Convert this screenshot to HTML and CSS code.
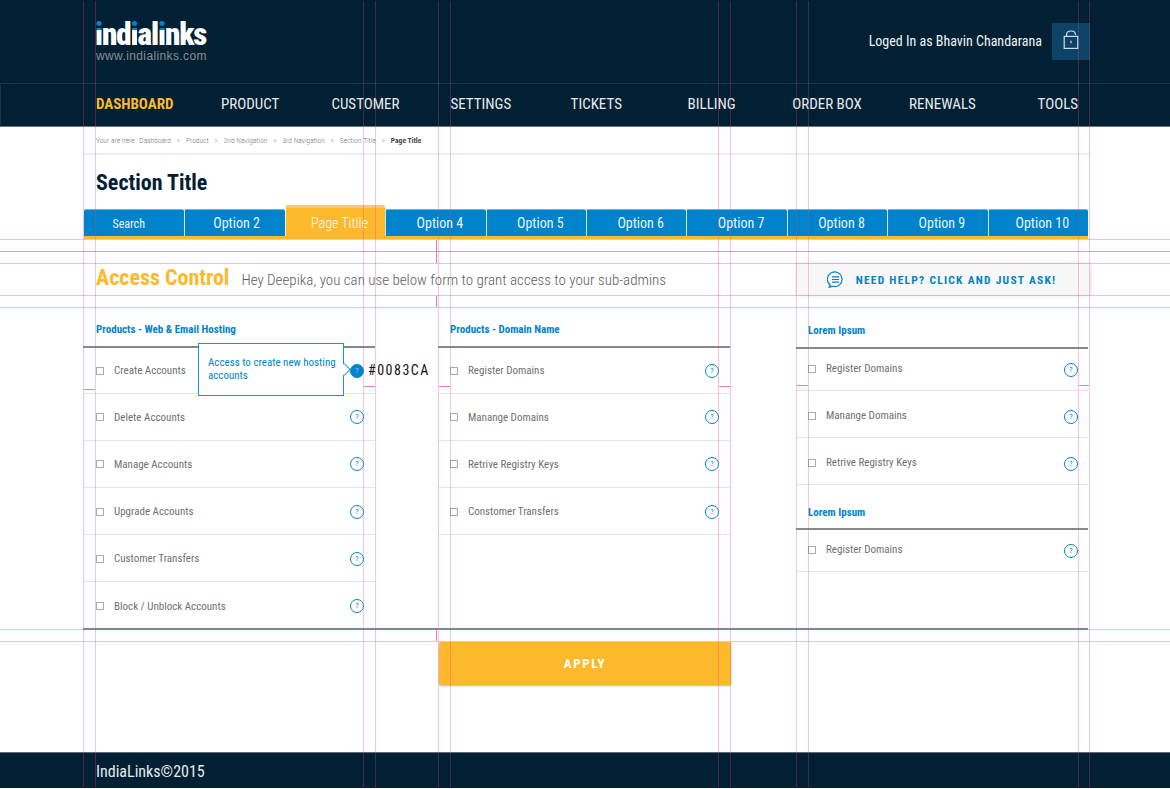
FILE: index.html
```html
<!DOCTYPE html>
<html lang="en">
  <head>
    <meta charset="UTF-8" />
    <title>IndiaLinks - Access Control</title>
    <link rel="stylesheet" href="styles.css">
  </head>
  <body>
    <header class="top">
      <div class="top-inner">
        <div class="logo">
          <div class="logo-name"><span class="dot-i">i</span>nd<span class="dot-i">i</span>al<span class="dot-i">i</span>nks</div>
          <div class="logo-url">www.indialinks.com</div>
        </div>
        <div class="user">
          <span class="user-name">Loged In as Bhavin Chandarana</span>
          <a class="lock" href="#">
            <svg width="16" height="20" viewBox="0 0 16 20" fill="none" stroke="#d5dde2" stroke-width="1.2">
              <rect x="1.2" y="6.4" width="13.6" height="12" />
              <path d="M3.6 6.4V4.2C3.6 2.2 5.6 1 8 1S12.4 2.2 12.4 4.2V5" />
              <path d="M8 10.8v2.4" />
            </svg>
          </a>
        </div>
      </div>
    </header>

    <nav class="mainnav">
      <a class="active" href="#">DASHBOARD</a>
      <a href="#">PRODUCT</a>
      <a href="#">CUSTOMER</a>
      <a href="#">SETTINGS</a>
      <a href="#">TICKETS</a>
      <a href="#">BILLING</a>
      <a href="#">ORDER BOX</a>
      <a href="#">RENEWALS</a>
      <a href="#">TOOLS</a>
    </nav>

    <main class="wrap">
      <div class="crumbs">
        <span>Your are here : Dashboard</span><i>&gt;</i>
        <span>Product</span><i>&gt;</i>
        <span>2nd Navigation</span><i>&gt;</i>
        <span>3rd Navigation</span><i>&gt;</i>
        <span>Section Title</span><i>&gt;</i>
        <b>Page Title</b>
      </div>

      <h1 class="section-title">Section Title</h1>

      <div class="tabs">
        <a class="search" href="#">Search</a>
        <a class="second-tab" href="#">Option 2</a>
        <a class="current" href="#">Page Titlle</a>
        <a href="#">Option 4</a>
        <a href="#">Option 5</a>
        <a href="#">Option 6</a>
        <a href="#">Option 7</a>
        <a href="#">Option 8</a>
        <a href="#">Option 9</a>
        <a href="#">Option 10</a>
      </div>

      <div class="heading">
        <h2>Access Control</h2>
        <p>Hey Deepika, you can use below form to grant access to your sub-admins</p>
        <a class="help" href="#">
          <svg width="17" height="17" viewBox="0 0 17 17" fill="none" stroke="#0083ca" stroke-width="1.2">
            <path d="M3.4 14.2A7.3 7.3 0 1 1 5.6 15.3L2.2 16Z" />
            <path d="M5 5.8h7M5 8.5h7M5 11.2h7" />
          </svg>
          NEED HELP? CLICK AND JUST ASK!
        </a>
      </div>

      <div class="columns">
        <section class="col">
          <h3>Products - Web &amp; Email Hosting</h3>
          <ul>
            <li class="has-tip">
              <span class="box"></span>Create Accounts<span class="q on">?</span>
              <div class="tip">Access to create new hosting accounts</div>
              <span class="hex">#0083CA</span>
            </li>
            <li><span class="box"></span>Delete Accounts<span class="q">?</span></li>
            <li><span class="box"></span>Manage Accounts<span class="q">?</span></li>
            <li><span class="box"></span>Upgrade Accounts<span class="q">?</span></li>
            <li><span class="box"></span>Customer Transfers<span class="q">?</span></li>
            <li><span class="box"></span>Block / Unblock Accounts<span class="q">?</span></li>
          </ul>
        </section>

        <section class="col middle">
          <h3>Products - Domain Name</h3>
          <ul>
            <li class="has-tip"><span class="box"></span>Register Domains<span class="q">?</span></li>
            <li><span class="box"></span>Manange Domains<span class="q">?</span></li>
            <li><span class="box"></span>Retrive Registry Keys<span class="q">?</span></li>
            <li><span class="box"></span>Constomer Transfers<span class="q">?</span></li>
          </ul>
        </section>

        <section class="col side">
          <h3>Lorem Ipsum</h3>
          <ul>
            <li><span class="box"></span>Register Domains<span class="q">?</span></li>
            <li><span class="box"></span>Manange Domains<span class="q">?</span></li>
            <li><span class="box"></span>Retrive Registry Keys<span class="q">?</span></li>
          </ul>
          <h3 class="second">Lorem Ipsum</h3>
          <ul>
            <li><span class="box"></span>Register Domains<span class="q">?</span></li>
          </ul>
        </section>
      </div>

      <div class="actions">
        <button class="apply">APPLY</button>
      </div>
    </main>

    <footer class="foot">IndiaLinks©2015</footer>

    <!-- design guides left on top of the comp -->
    <svg class="guides" width="1170" height="789" viewBox="0 0 1170 789">
      <g stroke="#f0408a" stroke-width="1" fill="none">
        <path stroke-opacity="0.3" d="M83.5 1V789M95.5 1V789M363.5 1V789M375.5 1V789M438.5 1V789M450.5 1V789M718.5 1V789M730.5 1V789M796.5 1V789M808.5 1V789M1078.5 1V789M1089.5 1V789" />
        <path stroke-opacity="0.35" d="M0 239.5H1170M0 263.5H1170M0 295.5H1170M0 307.5H1170M0 641.5H1170" />
        <path stroke-opacity="0.6" d="M0 251.5H1170" />
        <path stroke-opacity="0.35" d="M0 629.5H1170" />
        <path stroke-opacity="0.7" d="M436.5 240V251M436.5 252V263M436.5 296V307M436.5 630V641" />
        <path stroke-opacity="0.7" d="M84 389.5H95M364 386.5H375M439 386.5H450M719 386.5H730M797 385.5H808M1079 385.5H1089" />
      </g>
    </svg>
  </body>
</html>
```

FILE: styles.css
```css
* {
  box-sizing: border-box;
}
html,
body {
  margin: 0;
  height: 789px;
  overflow: hidden;
}
body {
  position: relative;
  font-family: Roboto, sans-serif;
  font-stretch: condensed;
  background: #fff;
  color: #666;
}
a {
  color: inherit;
  text-decoration: none;
}

/* header */
.top {
  height: 83px;
  background: #012033;
}
.top-inner {
  margin-left: 83px;
  width: 1007px;
  padding: 23px 0 0 13px;
  display: flex;
  justify-content: space-between;
}
.logo-name {
  margin-left: -1px;
  font-size: 31px;
  line-height: 24px;
  height: 26px;
  font-weight: 900;
  letter-spacing: -1.1px;
  color: #fff;
}
.dot-i {
  background: linear-gradient(#0083ca 0 14px, #fff 14px);
  -webkit-background-clip: text;
  background-clip: text;
  color: transparent;
}
.logo-url {
  font-family: "Liberation Sans", sans-serif;
  font-stretch: normal;
  font-size: 12px;
  line-height: 15px;
  letter-spacing: 0.38px;
  color: #8a8f93;
}
.user {
  display: flex;
  align-items: center;
  gap: 10px;
  height: 37px;
  font-size: 14px;
  color: #f1f3f4;
}
.user-name {
  padding-bottom: 2px;
}
.lock {
  width: 38px;
  height: 37px;
  background: #0b4468;
  display: flex;
  align-items: center;
  justify-content: center;
}
.lock svg {
  margin-bottom: 3px;
}

/* main navigation */
.mainnav {
  height: 44px;
  padding: 0 0 2px 76px;
  display: grid;
  grid-template-columns: repeat(9, 115.4px);
  align-items: center;
  background: #012033;
  border-top: 1px solid #1d3442;
  border-bottom: 1px solid #6b7780;
  border-left: 1px solid #1d3442;
  font-size: 15px;
  color: #e8ebed;
}
.mainnav a {
  text-align: center;
}
.mainnav .active {
  color: #fdb92c;
  font-weight: 700;
}

/* page */
.wrap {
  margin-left: 83px;
  width: 1007px;
}
.crumbs {
  height: 28px;
  padding: 1px 0 0 13px;
  display: flex;
  align-items: center;
  gap: 5.7px;
  border-bottom: 2px solid #eee;
  font-size: 7.5px;
  font-weight: 300;
  color: #777;
}
.crumbs i {
  font-style: normal;
  font-size: 8px;
  color: #888;
}
.crumbs b {
  color: #444;
  font-weight: 700;
}
.section-title {
  margin: 0;
  padding: 15px 0 0 13px;
  height: 50px;
  font-size: 22px;
  line-height: 26px;
  color: #012033;
}

/* tabs */
.tabs {
  margin: 4px 0 0 1px;
  width: 1004px;
  height: 30px;
  display: grid;
  grid-template-columns: repeat(10, 1fr);
  align-items: end;
  border-bottom: 3px solid #fdb92c;
}
.tabs a {
  height: 27px;
  padding-left: 8px;
  background: #0083ca;
  border-top: 1px solid #6bb6e0;
  border-left: 1px solid #cfe7f5;
  border-radius: 2px 2px 0 0;
  text-align: center;
  font-size: 14px;
  line-height: 26px;
  color: #eaf5fb;
}
.tabs a:first-child {
  border-left: 0;
}
.tabs .search {
  padding: 0 11px 0 0;
  font-size: 12px;
  line-height: 28px;
}
.tabs .second-tab {
  padding-left: 3px;
}
.tabs .current {
  height: 31px;
  margin-top: -4px;
  background: #fdb92c;
  border-top: 3px solid #fecb5f;
  border-left-color: #fff;
  line-height: 30px;
  font-weight: 300;
  color: #fff;
}

/* heading row */
.heading {
  margin-top: 25px;
  height: 31px;
  padding-left: 13px;
  display: flex;
  align-items: center;
  font-weight: 300;
}
.heading h2 {
  margin: 0 0 4px;
  font-size: 22px;
  font-weight: 700;
  color: #fdb92c;
}
.heading p {
  margin: 0 0 0 12px;
  font-size: 15px;
  color: #5d5d5d;
}
.help {
  margin-left: auto;
  width: 293px;
  height: 31px;
  padding-right: 4px;
  display: flex;
  align-items: center;
  justify-content: center;
  gap: 12px;
  background: #f7f7f7;
  box-shadow: 0 0 4px rgba(0, 0, 0, 0.2);
  font-size: 11.5px;
  font-weight: 700;
  letter-spacing: 1.25px;
  color: #0083ca;
}

/* permission columns */
.columns {
  display: grid;
  grid-template-columns: 292px 292px 292px;
  column-gap: 63px;
  height: 335px;
  border-bottom: 2px solid #888;
  width: 1005px;
}
.col h3 {
  margin: 0;
  height: 53px;
  padding: 28px 0 0 13px;
  border-bottom: 2px solid #888;
  font-size: 11px;
  line-height: 14px;
  font-weight: 700;
  color: #0083ca;
}
.col ul {
  margin: 0;
  padding: 0;
  list-style: none;
}
.col li {
  position: relative;
  height: 47px;
  padding: 0 11px 0 13px;
  display: flex;
  align-items: center;
  border-bottom: 1px solid #e4e4e4;
  font-size: 11px;
  color: #707070;
}
.col li:nth-child(n+4) {
  padding-top: 1px;
}
.col li.has-tip {
  height: 46px;
}
.col:first-child li:last-child {
  border-bottom: 0;
}
.middle h3 {
  padding-left: 12px;
}
.middle li {
  padding-left: 12px;
}
.box {
  width: 8px;
  height: 8px;
  margin-right: 10px;
  border: 1px solid #aaa;
}
.q {
  margin-left: auto;
  width: 14px;
  height: 14px;
  border: 1.3px solid #0083ca;
  border-radius: 50%;
  text-align: center;
  font-size: 8px;
  line-height: 11.5px;
  color: #0083ca;
}
.q.on {
  background: #0083ca;
  color: #9fd2ee;
}

/* right column rows sit a little higher */
.col.side {
  margin: 0 -3px 0 3px;
}
.side h3 {
  height: 54px;
  padding: 29px 0 0 12px;
}
.side h3.second {
  height: 45px;
  padding-top: 21px;
}
.side li {
  padding: 3px 10px 0 12px;
}
.side li:first-child {
  height: 42px;
  padding: 0 10px 2px 12px;
}
.side .q {
  margin-top: 2px;
}

/* tooltip sits over the first row */
.tip {
  position: absolute;
  left: 115px;
  top: -5px;
  width: 146px;
  height: 53px;
  padding: 12px 6px 0 9px;
  background: #fff;
  border: 1.5px solid #1c8fcf;
  font-size: 11px;
  line-height: 13px;
  color: #0083ca;
}
.tip::after {
  content: "";
  position: absolute;
  right: -5.5px;
  top: 21px;
  width: 8px;
  height: 8px;
  background: #fff;
  border-top: 1.5px solid #1c8fcf;
  border-right: 1.5px solid #1c8fcf;
  transform: rotate(45deg);
}
.hex {
  position: absolute;
  left: 285px;
  top: 14px;
  font-size: 14px;
  letter-spacing: 1.5px;
  color: #111;
}

.actions {
  padding: 12px 0 0 356px;
}
.apply {
  display: block;
  width: 292px;
  height: 43px;
  border: 0;
  border-radius: 2px;
  background: #fdb92c;
  box-shadow: 0 1px 2px rgba(0, 0, 0, 0.3);
  font-family: inherit;
  font-stretch: condensed;
  font-size: 13px;
  font-weight: 700;
  letter-spacing: 1.7px;
  color: #fff;
}

.foot {
  position: absolute;
  left: 0;
  right: 0;
  top: 752px;
  height: 36px;
  padding-left: 96px;
  background: #012033;
  border-top: 1px solid #5a6c78;
  font-size: 16px;
  line-height: 37px;
  color: #e8ebed;
}

.guides {
  position: absolute;
  left: 0;
  top: 0;
  pointer-events: none;
}
```
